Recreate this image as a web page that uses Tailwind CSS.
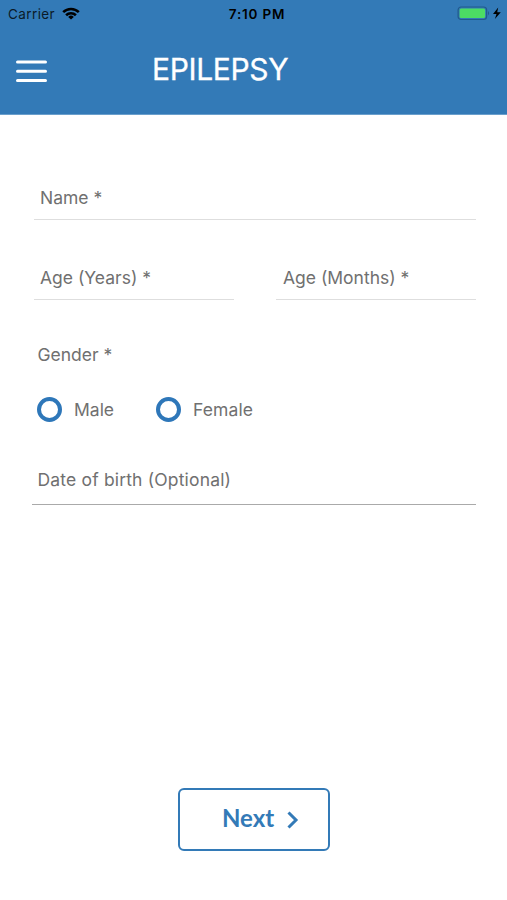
<!DOCTYPE html>
<html lang="en">
<head>
<meta charset="utf-8">
<title>Epilepsy</title>
<script src="https://cdn.jsdelivr.net/npm/@tailwindcss/browser@4"></script>
</head>
<body class="bg-white">
<div class="w-[507px] h-[900px] flex flex-col overflow-hidden bg-white font-['Inter','Liberation_Sans',sans-serif] text-[#707070]">
  <header class="h-[115px] shrink-0 bg-[#337ab7] border-b border-[#6a9fcc]">
    <div class="h-7 grid grid-cols-3 items-center pl-2 pr-[5px] text-black">
      <div class="flex items-center gap-[7px]">
        <span class="text-[13.5px] leading-7 tracking-[0.4px] text-[#0b1a28]">Carrier</span>
        <svg class="w-[18px] h-[13px] -mt-0.5" viewBox="0 0 18 13" fill="none" stroke="#000" stroke-width="2.6"><path d="M1.2 5.1a11.2 11.2 0 0 1 15.6 0M4.1 8.3a7 7 0 0 1 9.8 0"/><path d="M9 12.6 6.2 9.9a4 4 0 0 1 5.6 0z" fill="#000" stroke="none"/></svg>
      </div>
      <span class="pl-[4px] text-center text-[13.5px] leading-7 font-semibold tracking-[0.8px] whitespace-nowrap">7:10 PM</span>
      <div class="flex justify-end">
        <svg class="w-[45px] h-4 -mt-0.5" viewBox="0 0 45 16"><rect x="1.1" y="2" width="28.5" height="12.5" rx="3" fill="#337ab7" stroke="#225a8b" stroke-width="1.2"/><rect x="2.6" y="3.5" width="25.5" height="9.5" rx="1.5" fill="#4cdc64"/><path d="M31 6q2.2 2.2 0 4.4z" fill="#225a8b"/><path d="M41.2 2.6 36 9.1h3.5l-1.6 5L43.8 7.3h-3.6z" fill="#000"/></svg>
      </div>
    </div>
    <div class="h-[84px] flex items-center pl-4">
      <svg class="w-[31px] h-[23px] mt-[3px]" viewBox="0 0 31 23" stroke="#fff" stroke-width="3" stroke-linecap="round"><path d="M1.5 2h28M1.5 11.3h28M1.5 20.5h28"/></svg>
      <h1 class="ml-[105px] -mt-0.5 text-[30px] leading-9 text-white tracking-[-0.35px] [-webkit-text-stroke:0.3px_white]">EPILEPSY</h1>
    </div>
  </header>

  <main class="flex flex-col pl-8 pr-[31px] text-[17.5px] leading-6">
    <div class="ml-0.5 mt-[71px] h-[34px] pl-[6px] border-b border-[#dedede]">Name *</div>
    <div class="ml-0.5 mt-[46px] flex justify-between">
      <div class="w-[200px] h-[34px] pl-[6px] border-b border-[#dedede]">Age (Years) *</div>
      <div class="w-[200px] h-[34px] pl-[7px] border-b border-[#dedede]">Age (Months) *</div>
    </div>
    <div class="mt-[43px] pl-[5.5px]">Gender *</div>
    <div class="mt-[29px] pl-[5px] flex items-center h-[26px]">
      <span class="size-[25px] rounded-full border-4 border-[#2e77b9]"></span>
      <span class="ml-3 mt-px w-[82px]">Male</span>
      <span class="size-[25px] rounded-full border-4 border-[#2e77b9]"></span>
      <span class="ml-3 mt-px tracking-[0.1px]">Female</span>
    </div>
    <div class="mt-[46px] h-[37px] pl-[5.5px] border-b border-[#aaa] tracking-[0.17px]">Date of birth (Optional)</div>
  </main>

  <button class="mt-auto mb-[49px] ml-[178px] w-[152px] h-[63px] shrink-0 rounded-md border-2 border-[#337ab7] text-[#337ab7] flex items-center pl-[42px] pb-[3px]">
    <span class="font-['Lato',sans-serif] font-bold text-[24px] leading-8">Next</span>
    <svg class="ml-[13px] mt-[3px] w-3 h-[18px]" viewBox="0 0 12 18" fill="none" stroke="currentColor" stroke-width="3"><path d="m1.5 1.5 7.5 7.5-7.5 7.5"/></svg>
  </button>
</div>
</body>
</html>
